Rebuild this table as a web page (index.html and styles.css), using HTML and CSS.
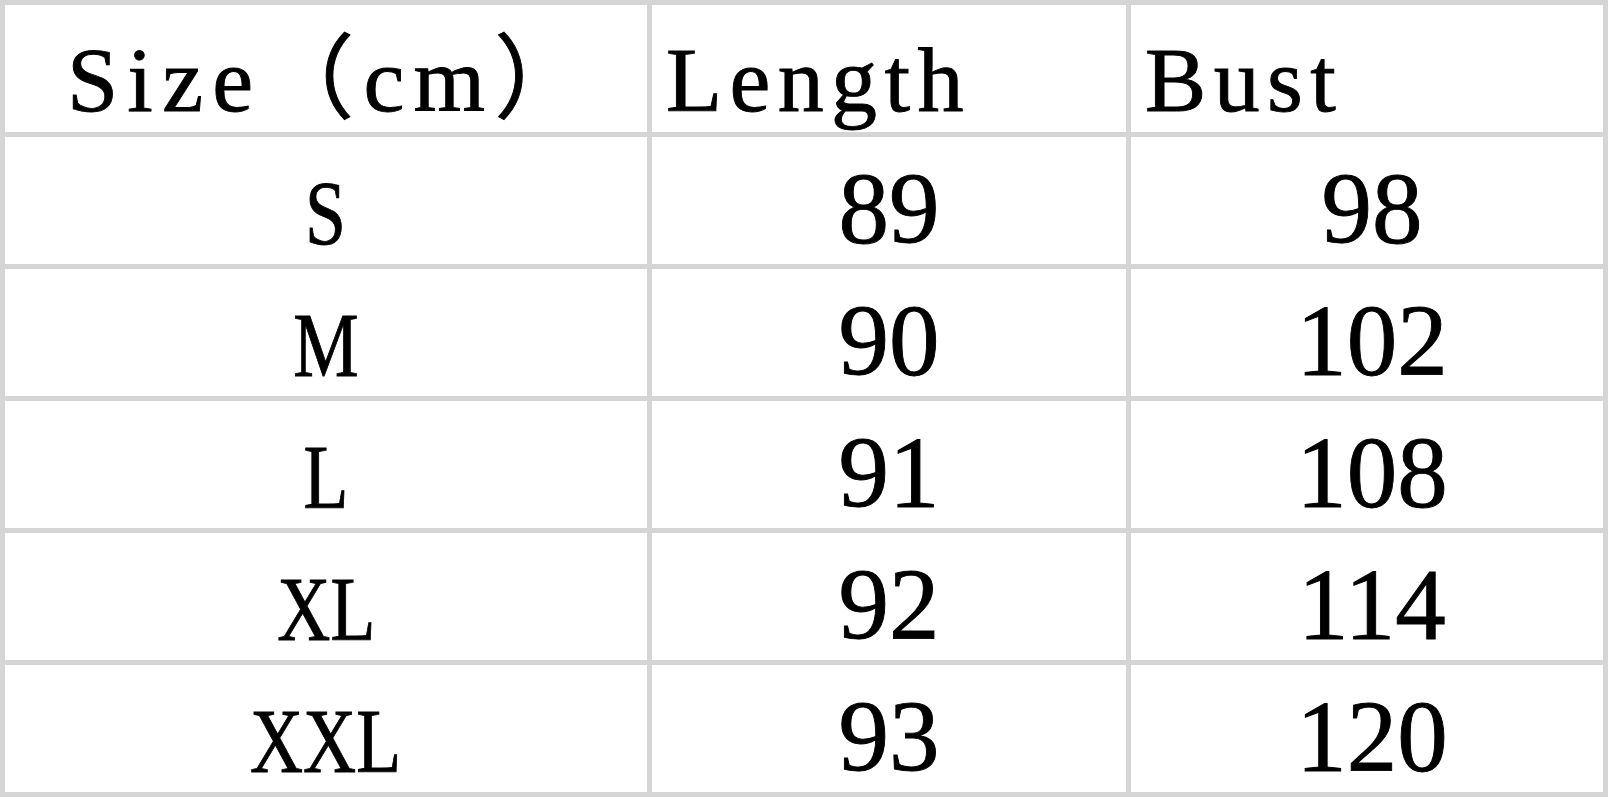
FILE: index.html
```html
<!DOCTYPE html>
<html lang="en">
<head>
<meta charset="utf-8">
<title>Size chart</title>
<link rel="stylesheet" href="styles.css">
</head>
<body>
<div class="sheet">
  <div class="cell head head-first">Size（cm）</div>
  <div class="cell head">Length</div>
  <div class="cell head">Bust</div>

  <div class="cell size"><span class="letters">S</span></div>
  <div class="cell num">89</div>
  <div class="cell num num-last">98</div>

  <div class="cell size"><span class="letters">M</span></div>
  <div class="cell num">90</div>
  <div class="cell num num-last">102</div>

  <div class="cell size"><span class="letters">L</span></div>
  <div class="cell num">91</div>
  <div class="cell num num-last">108</div>

  <div class="cell size"><span class="letters">XL</span></div>
  <div class="cell num">92</div>
  <div class="cell num num-last">114</div>

  <div class="cell size"><span class="letters">XXL</span></div>
  <div class="cell num">93</div>
  <div class="cell num num-last">120</div>
</div>
</body>
</html>
```

FILE: styles.css
```css
html, body {
  margin: 0;
  padding: 0;
  background: #ffffff;
}

body {
  width: 1610px;
  height: 800px;
  overflow: hidden;
  font-family: "Liberation Serif", "Noto Sans CJK SC", serif;
  color: #000000;
}

.sheet {
  display: grid;
  grid-template-columns: 642px 474px 472px;
  grid-template-rows: repeat(6, 127px);
  gap: 5px;
  padding: 5px;
  width: max-content;
  background: #d5d5d5;
}

.cell {
  background: #ffffff;
  display: flex;
  align-items: flex-end;
  justify-content: center;
  line-height: 1;
  white-space: nowrap;
  -webkit-text-stroke: 0.9px #000000;
}

.head {
  justify-content: flex-start;
  font-size: 92px;
  letter-spacing: 0.08em;
  padding: 0 0 6px 14px;
}

.head-first {
  padding-left: 62px;
  letter-spacing: 0.1em;
}

.size {
  font-size: 92px;
  padding-bottom: 5px;
}

.letters {
  display: inline-block;
  transform: scaleX(0.8);
  transform-origin: center bottom;
}

.num {
  font-size: 101px;
  padding-bottom: 4px;
}

.num-last {
  padding-left: 10px;
}
```
